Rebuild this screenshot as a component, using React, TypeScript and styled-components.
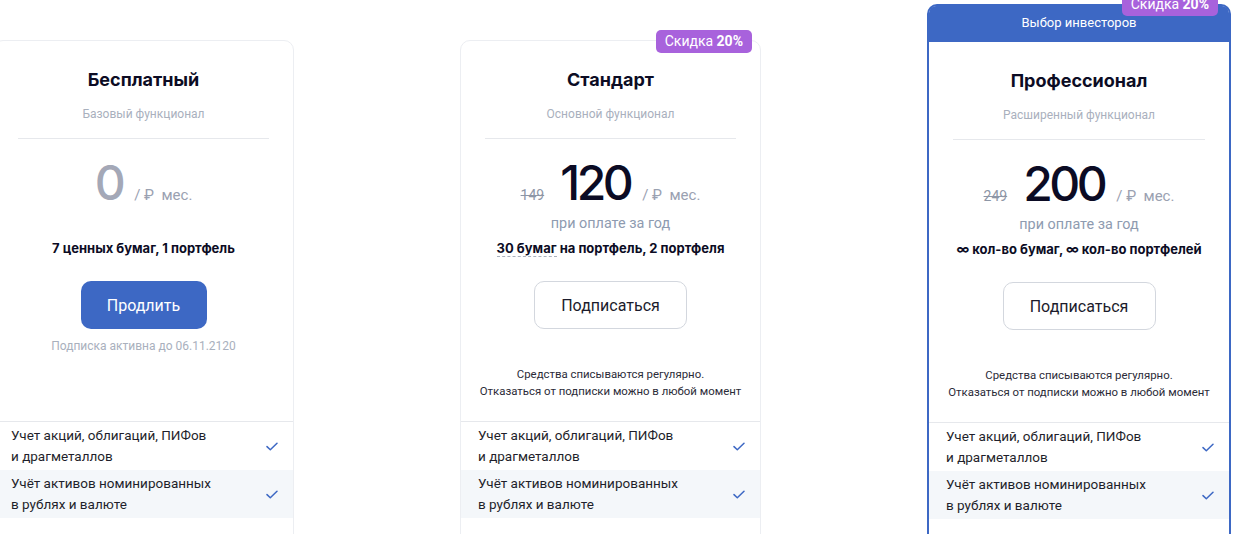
import React, {FC} from "react";
import styled, {createGlobalStyle} from 'styled-components';

type Plan = {
    title: string;
    subtitle: string;
    price: number;
    oldPrice?: number;
    yearly: boolean;
    limits: React.ReactNode;
    action: 'renew' | 'subscribe';
    badge?: boolean;
    featured?: boolean;
};

const Check: FC = () => (
    <svg width="12" height="9" viewBox="0 0 12 9" fill="none">
        <path d="M1 4.6L4.3 7.8L11 1.2" stroke="#3d68c4" strokeWidth="1.5" strokeLinecap="round" strokeLinejoin="round"/>
    </svg>
);

const PlanCard: FC<{ plan: Plan }> = ({plan}) => (
    <Column $featured={!!plan.featured}>
        <Card $featured={!!plan.featured}>
            {plan.featured && <Ribbon>Выбор инвесторов</Ribbon>}
            {plan.badge && <Badge $featured={!!plan.featured}>Скидка <b>20%</b></Badge>}
            <Summary>
                <Title>{plan.title}</Title>
                <Subtitle>{plan.subtitle}</Subtitle>
                <Divider/>
                <PriceRow>
                    {plan.oldPrice && <OldPrice>{plan.oldPrice}</OldPrice>}
                    <Amount $free={plan.price === 0}>{plan.price}</Amount>
                    <Unit>/&nbsp;₽&nbsp; мес.</Unit>
                </PriceRow>
                <PeriodNote>{plan.yearly ? 'при оплате за год' : ''}</PeriodNote>
                <Limits>{plan.limits}</Limits>
                {plan.action === 'renew' ? (
                    <>
                        <SolidButton>Продлить</SolidButton>
                        <Footnote>Подписка активна до 06.11.2120</Footnote>
                    </>
                ) : (
                    <>
                        <OutlineButton>Подписаться</OutlineButton>
                        <Terms>
                            Средства списываются регулярно.<br/>
                            Отказаться от подписки можно в любой момент
                        </Terms>
                    </>
                )}
            </Summary>
            <Features>
                {features.map(([a, b], i) => (
                    <FeatureRow key={a} $shaded={i % 2 === 1}>
                        <FeatureText>{a}<br/>{b}</FeatureText>
                        <Check/>
                    </FeatureRow>
                ))}
            </Features>
        </Card>
    </Column>
);

export default function App() {
    return (
        <>
            <GlobalStyle/>
            <Page>
                <Track>
                    {plans.map(p => <PlanCard key={p.title} plan={p}/>)}
                </Track>
            </Page>
        </>
    );
}

const GlobalStyle = createGlobalStyle`
  html, body {
    margin: 0;
    padding: 0;
    background: #fff;
    overflow: hidden;
    font-family: Roboto, "Liberation Sans", sans-serif;
    color: #1c1c2c;
  }
`;

const Page = styled.div`
  width: 1243px;
  height: 534px;
  overflow: hidden;
  padding-top: 4px;
  box-sizing: border-box;
`;

const Track = styled.div`
  display: flex;
  align-items: flex-start;
  gap: 166px;
  margin-left: -7px;
`;

const Column = styled.div<{ $featured: boolean }>`
  flex: none;
  width: ${p => p.$featured ? 304 : 301}px;
  padding-top: ${p => p.$featured ? 0 : 36}px;
`;

const Card = styled.div<{ $featured: boolean }>`
  position: relative;
  box-sizing: border-box;
  background: #fff;
  border: ${p => p.$featured ? '2px solid #3d68c4' : '1px solid #eceef2'};
  border-radius: 10px;
`;

const Ribbon = styled.div`
  height: 36px;
  line-height: 34px;
  background: #3d68c4;
  color: #fff;
  font-size: 13px;
  text-align: center;
  border-radius: 7px 7px 0 0;
`;

const Badge = styled.div<{ $featured: boolean }>`
  position: absolute;
  top: ${p => p.$featured ? -13 : -11}px;
  right: ${p => p.$featured ? 11 : 8}px;
  height: 23px;
  line-height: 23px;
  padding: 0 9px;
  border-radius: 5px;
  background: #a862dc;
  color: #fff;
  font-size: 14px;

  b {
    font-weight: 700;
  }
`;

const Summary = styled.div`
  height: 380px;
  box-sizing: border-box;
  padding: 27px 24px 0;
  display: flex;
  flex-direction: column;
  align-items: center;
  text-align: center;
`;

const Title = styled.div`
  font-family: Inter, "Liberation Sans", sans-serif;
  font-weight: 700;
  font-size: 18px;
  line-height: 24px;
  color: #0c0c24;
`;

const Subtitle = styled.div`
  margin-top: 14px;
  font-size: 12px;
  line-height: 16px;
  color: #a9b0bd;
`;

const Divider = styled.div`
  align-self: stretch;
  margin-top: 16px;
  height: 1px;
  background: #e6e8ec;
`;

const PriceRow = styled.div`
  margin-top: 16px;
  display: flex;
  align-items: baseline;
  height: 56px;
`;

const OldPrice = styled.span`
  margin-right: 16px;
  font-size: 14px;
  color: #8d96a6;
  text-decoration: line-through;
`;

const Amount = styled.span<{ $free: boolean }>`
  font-family: Inter, "Liberation Sans", sans-serif;
  font-weight: 500;
  font-size: 48px;
  line-height: 56px;
  letter-spacing: -3.5px;
  color: ${p => p.$free ? '#a4a8b7' : '#0b0b24'};
`;

const Unit = styled.span`
  margin-left: 12px;
  font-size: 15px;
  color: #9aa1b1;
`;

const PeriodNote = styled.div`
  margin-top: 5px;
  height: 16px;
  font-size: 14.4px;
  line-height: 16px;
  color: #8e9bb0;
`;

const Limits = styled.div`
  margin-top: 7px;
  font-family: Inter, "Liberation Sans", sans-serif;
  font-weight: 700;
  font-size: 13px;
  line-height: 18px;
  color: #0c0c24;
`;

const Dashed = styled.span`
  border-bottom: 1px dashed #a9b0bd;
`;

const BaseButton = styled.button`
  margin-top: 24px;
  height: 48px;
  padding: 0 26px;
  border-radius: 10px;
  font-family: Roboto, "Liberation Sans", sans-serif;
  font-size: 16px;
  cursor: pointer;
`;

const SolidButton = styled(BaseButton)`
  min-width: 126px;
  border: none;
  background: #3d68c4;
  color: #fff;
`;

const OutlineButton = styled(BaseButton)`
  min-width: 153px;
  border: 1px solid #d3d7de;
  background: #fff;
  color: #1c1c2c;
`;

const Footnote = styled.div`
  margin-top: 9px;
  font-size: 12px;
  line-height: 16px;
  color: #a9b0bd;
`;

const Terms = styled.div`
  margin-top: 37px;
  font-size: 11.4px;
  line-height: 17px;
  white-space: nowrap;
  color: #2b2b38;
`;

const Features = styled.div`
  border-top: 1px solid #e6e8ec;
  padding-bottom: 60px;
`;

const FeatureRow = styled.div<{ $shaded: boolean }>`
  height: 48px;
  display: flex;
  align-items: center;
  justify-content: space-between;
  padding: 0 15px 0 17px;
  background: ${p => p.$shaded ? '#f4f7fa' : '#fff'};
`;

const FeatureText = styled.div`
  font-size: 13.5px;
  line-height: 21px;
  color: #1f1f2b;
`;

const features = [
    ['Учет акций, облигаций, ПИФов', 'и драгметаллов'],
    ['Учёт активов номинированных', 'в рублях и валюте'],
];

const plans: Plan[] = [
    {
        title: 'Бесплатный',
        subtitle: 'Базовый функционал',
        price: 0,
        yearly: false,
        limits: '7 ценных бумаг, 1 портфель',
        action: 'renew',
    },
    {
        title: 'Стандарт',
        subtitle: 'Основной функционал',
        price: 120,
        oldPrice: 149,
        yearly: true,
        limits: <><Dashed>30 бумаг</Dashed> на портфель, 2 портфеля</>,
        action: 'subscribe',
        badge: true,
    },
    {
        title: 'Профессионал',
        subtitle: 'Расширенный функционал',
        price: 200,
        oldPrice: 249,
        yearly: true,
        limits: '∞ кол-во бумаг, ∞ кол-во портфелей',
        action: 'subscribe',
        badge: true,
        featured: true,
    },
];
